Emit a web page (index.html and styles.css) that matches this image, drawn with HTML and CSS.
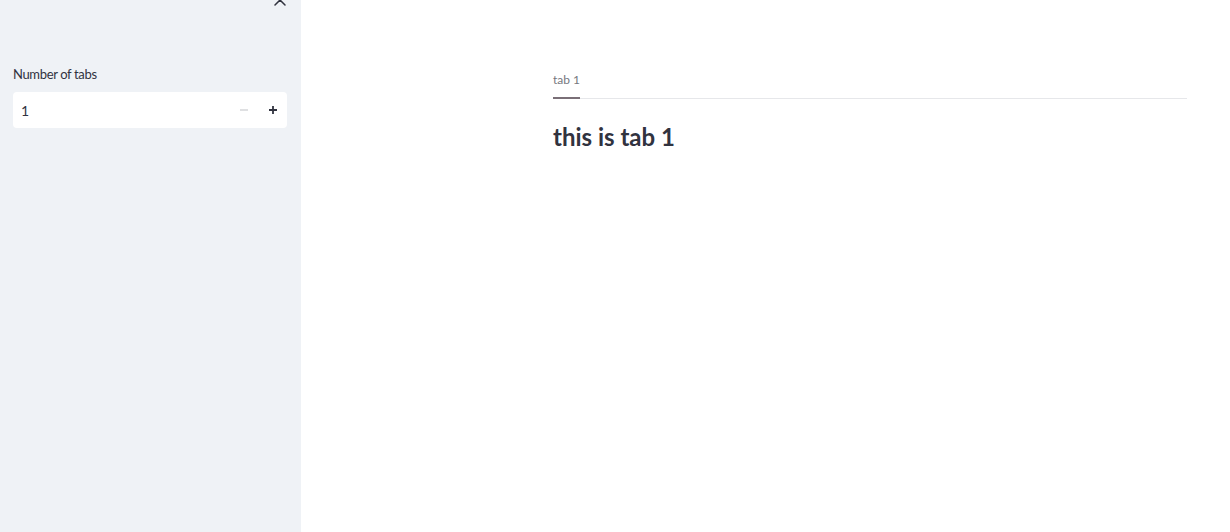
FILE: index.html
```html
<!DOCTYPE html>
<html>
<head>
<meta charset="utf-8">
<link rel="stylesheet" href="styles.css">
</head>
<body>
<div class="app">
  <aside class="sidebar">
    <button class="close" aria-label="Close sidebar">
      <svg width="14" height="14" viewBox="0 0 14 14"><path d="M2 2 L12 12 M12 2 L2 12" stroke="#31333f" stroke-width="1.5" stroke-linecap="round" fill="none"/></svg>
    </button>
    <div class="field">
      <label class="label">Number of tabs</label>
      <div class="number">
        <span class="value">1</span>
        <span class="step minus">
          <svg width="10" height="10" viewBox="0 0 10 10"><path d="M1 5 H9" stroke="#d5d6d9" stroke-width="1.5"/></svg>
        </span>
        <span class="step plus">
          <svg width="10" height="10" viewBox="0 0 10 10"><path d="M1 5 H9 M5 1 V9" stroke="#31333f" stroke-width="1.8"/></svg>
        </span>
      </div>
    </div>
  </aside>
  <main class="main">
    <div class="content">
      <div class="tabs">
        <div class="tab active">tab 1</div>
      </div>
      <h2 class="heading">this is tab 1</h2>
    </div>
  </main>
</div>
</body>
</html>
```

FILE: styles.css
```css
* { box-sizing: border-box; }
html, body { margin: 0; padding: 0; height: 100%; }
body {
  font-family: "Lato", "Open Sans", sans-serif;
  color: #31333f;
  background: #ffffff;
}
.app { display: flex; height: 532px; }
.sidebar {
  width: 301px;
  flex: 0 0 301px;
  background: #eff2f6;
  position: relative;
  padding: 66px 14px 0 13px;
}
.close {
  position: absolute;
  top: -7px;
  left: 273px;
  border: 0;
  background: none;
  padding: 0;
  width: 14px;
  height: 14px;
}
.label {
  display: block;
  font-size: 13px;
  letter-spacing: -0.35px;
  line-height: 16px;
  color: #31333f;
  margin-bottom: 10px;
}
.number {
  display: flex;
  align-items: center;
  height: 36px;
  background: #ffffff;
  border-radius: 4px;
  padding: 0 0 0 8px;
}
.value { flex: 1; font-size: 14px; }
.step {
  width: 28px;
  height: 36px;
  display: flex;
  align-items: center;
  justify-content: center;
}
.step.minus { margin-right: 1px; }
.main { flex: 1; padding: 70px 43px 0 252px; }
.tabs {
  display: flex;
  border-bottom: 1px solid #e6e7ea;
  height: 29px;
}
.tab {
  font-size: 12px;
  color: #75777e;
  padding-top: 2px;
  position: relative;
}
.tab.active::after {
  content: "";
  position: absolute;
  left: 0; right: 0; bottom: -1px;
  height: 2px;
  background: #7a6f77;
}
.heading {
  margin: 22px 0 0 0;
  font-size: 24px;
  font-weight: 700;
  line-height: 32px;
  color: #31333f;
}
```
